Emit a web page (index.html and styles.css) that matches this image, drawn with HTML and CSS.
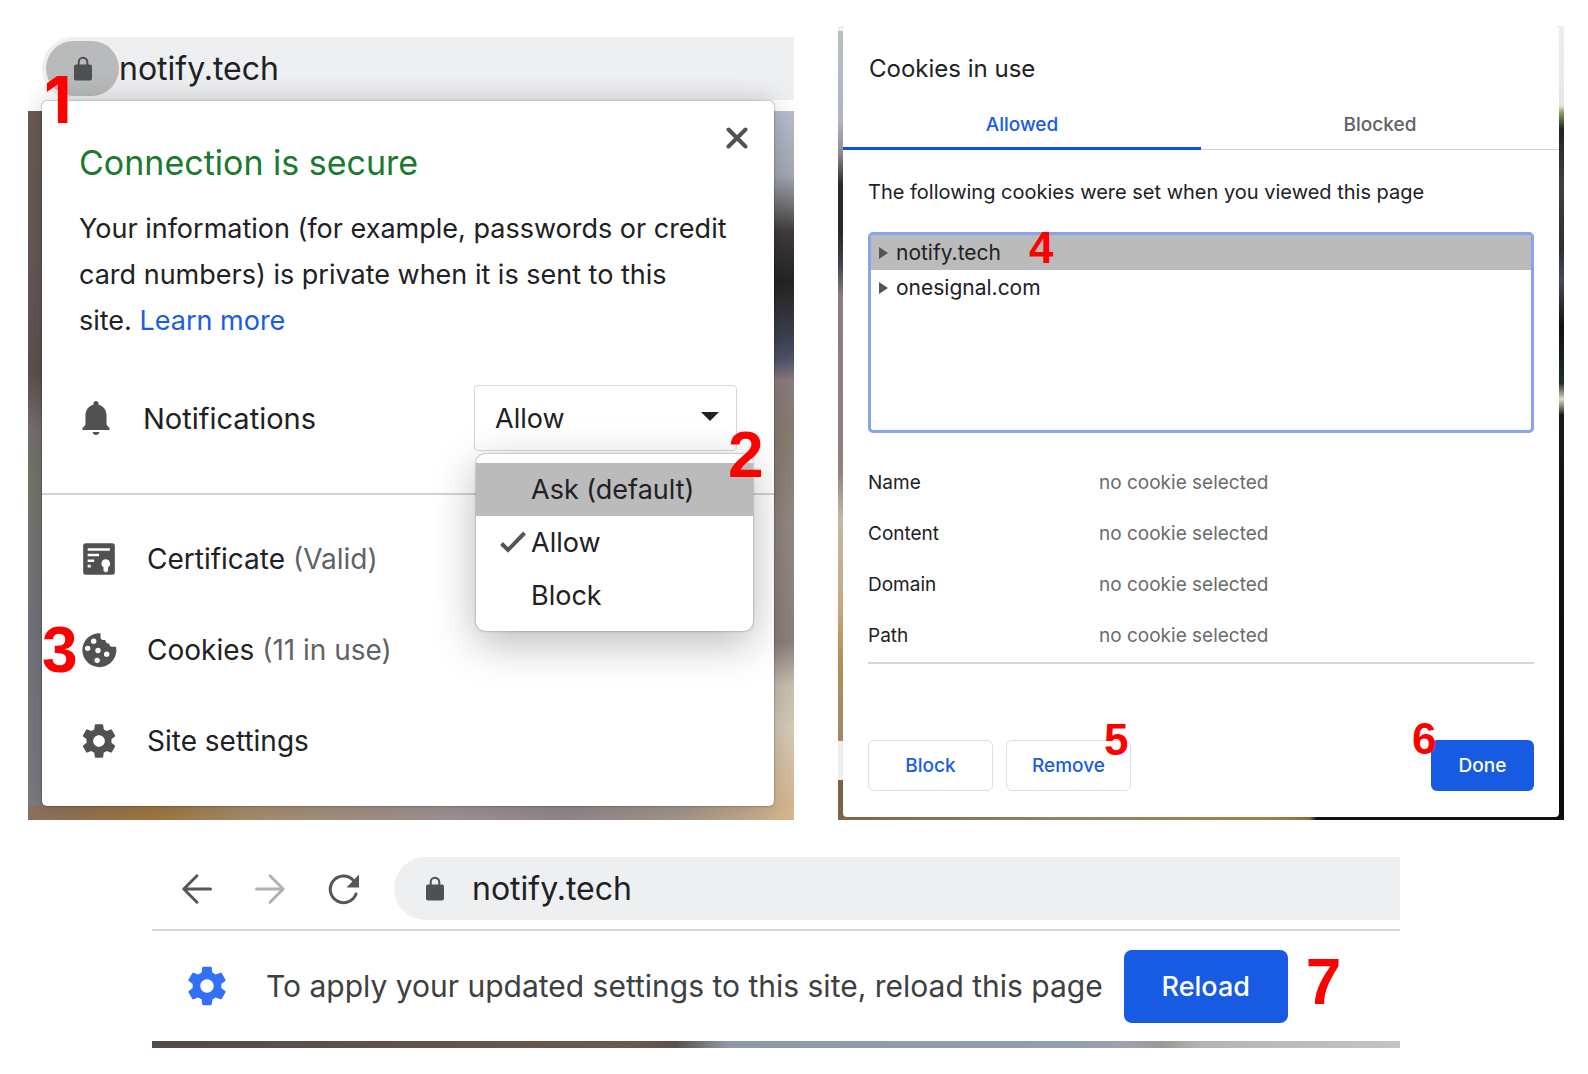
FILE: index.html
```html
<!DOCTYPE html>
<html lang="en">
<head>
  <meta charset="UTF-8" />
  <meta name="viewport" content="width=device-width, initial-scale=1.0"/>
  <title>Cookies in use</title>
  <link rel="stylesheet" href="styles.css">
</head>
<body>

  <!-- Shared icons -->
  <svg class="icon-defs" aria-hidden="true">
    <symbol id="icon-lock" viewBox="0 0 18 25">
      <path d="M4.7 10V6a4.3 4.3 0 0 1 8.6 0v4" fill="none" stroke="currentColor" stroke-width="2"/>
      <rect y="8.5" width="18" height="16" rx="2" fill="currentColor"/>
    </symbol>
    <symbol id="icon-gear" viewBox="0 0 24 24">
      <path fill="currentColor" d="M19.43 12.98c.04-.32.07-.64.07-.98s-.03-.66-.07-.98l2.11-1.65c.19-.15.24-.42.12-.64l-2-3.46c-.12-.22-.39-.3-.61-.22l-2.49 1c-.52-.4-1.08-.73-1.69-.98l-.38-2.65C14.46 2.18 14.25 2 14 2h-4c-.25 0-.46.18-.49.42l-.38 2.65c-.61.25-1.17.59-1.69.98l-2.49-1c-.23-.09-.49 0-.61.22l-2 3.46c-.13.22-.07.49.12.64l2.11 1.65c-.04.32-.07.65-.07.98s.03.66.07.98l-2.11 1.65c-.19.15-.24.42-.12.64l2 3.46c.12.22.39.3.61.22l2.49-1c.52.4 1.08.73 1.69.98l.38 2.65c.03.24.24.42.49.42h4c.25 0 .46-.18.49-.42l.38-2.65c.61-.25 1.17-.59 1.69-.98l2.49 1c.23.09.49 0 .61-.22l2-3.46c.12-.22.07-.49-.12-.64l-2.11-1.65zM12 15.5c-1.93 0-3.5-1.57-3.5-3.5s1.57-3.5 3.5-3.5 3.5 1.57 3.5 3.5-1.57 3.5-3.5 3.5z"/>
    </symbol>
  </svg>

  <main class="page">
    <div class="top-row">

      <!-- Site info popup -->
      <section class="shot site-shot">
        <div class="site-toolbar">
          <div class="omnibox">
            <button class="lock-chip" type="button" aria-label="View site information">
              <svg class="lock"><use href="#icon-lock"/></svg>
            </button>
            <span class="url">notify.tech</span>
          </div>
        </div>
        <span class="step step-1">1</span>

        <div class="site-photo">
          <div class="popup">
            <div class="popup-main">
              <div class="popup-header">
                <h1>Connection is secure</h1>
                <button class="close" type="button" aria-label="Close">
                  <svg viewBox="0 0 22 22"><path d="M2.5 2.5l17 17M19.5 2.5l-17 17"/></svg>
                </button>
              </div>
              <p>Your information (for example, passwords or credit card numbers) is private when it is sent to this site.&nbsp;<a href="#">Learn more</a></p>
              <div class="permission">
                <svg class="bell" viewBox="2 2 20 20"><path d="M12 22c1.1 0 2-.7 2-1.7h-4c0 1 .9 1.7 2 1.7zm6.2-6v-5.5c0-3.07-1.83-5.64-4.7-6.32V3.5c0-.83-.67-1.5-1.5-1.5s-1.5.67-1.5 1.5v.68C7.64 4.86 5.8 7.42 5.8 10.5V16L4 18v1.1h16V18l-1.8-2z"/></svg>
                <label for="notifications">Notifications</label>
                <div class="select">
                  <select id="notifications">
                    <option>Ask (default)</option>
                    <option selected>Allow</option>
                    <option>Block</option>
                  </select>
                  <div class="menu">
                    <button class="active" type="button">Ask (default)</button>
                    <button type="button">
                      <svg class="check" viewBox="0 0 26 22"><path d="M1.5 12.5L8 19 24.5 2"/></svg>
                      Allow
                    </button>
                    <button type="button">Block</button>
                  </div>
                  <span class="step step-2">2</span>
                </div>
              </div>
            </div>
            <ul class="popup-links">
              <li>
                <svg viewBox="0 0 24 24">
                  <path fill-rule="evenodd" d="M4 2.5h16A1.5 1.5 0 0 1 21.5 4v16a1.5 1.5 0 0 1-1.5 1.5H4A1.5 1.5 0 0 1 2.5 20V4A1.5 1.5 0 0 1 4 2.5zM5.2 5.5V7h13.3V5.5zM5.2 8.9v1.5H12V8.9zM5.2 12.3v1.5h3.9v-1.5zM5.2 15.4v1.7H7v-1.7zM16 12.2a2.6 2.6 0 0 0-1.3 4.8v2.2l1.4.9 1.3-.9V17A2.6 2.6 0 0 0 16 12.2z"/>
                </svg>
                <span>Certificate <small>(Valid)</small></span>
              </li>
              <li>
                <svg viewBox="0 0 24 24">
                  <path d="M12.9 1.9A10.2 10.2 0 1 0 22.2 10h-2.4c-1 0-1.6-.7-1.6-1.8C16.8 8.2 15.8 7.4 15.8 6h-1.3c-1 0-1.6-.7-1.6-1.6z"/>
                  <g class="crumbs"><circle cx="8.8" cy="6.7" r="1.6"/><circle cx="5.2" cy="11" r="1.6"/><circle cx="11.4" cy="12.3" r="1.6"/><circle cx="16.6" cy="14.5" r="1.6"/><circle cx="10.9" cy="18.2" r="1.6"/></g>
                </svg>
                <span>Cookies <small>(11 in use)</small></span>
                <span class="step step-3">3</span>
              </li>
              <li>
                <svg><use href="#icon-gear"/></svg>
                <span>Site settings</span>
              </li>
            </ul>
          </div>
        </div>
      </section>

      <!-- Cookies dialog -->
      <section class="shot cookie-shot">
        <div class="dialog">
          <h2>Cookies in use</h2>
          <div class="tabs">
            <button class="selected" type="button">Allowed</button>
            <button type="button">Blocked</button>
          </div>
          <div class="dialog-body">
            <p>The following cookies were set when you viewed this page</p>
            <ul class="tree">
              <li class="selected">notify.tech <span class="step small step-4">4</span></li>
              <li>onesignal.com</li>
            </ul>
            <table>
              <tr><th scope="row">Name</th><td>no cookie selected</td></tr>
              <tr><th scope="row">Content</th><td>no cookie selected</td></tr>
              <tr><th scope="row">Domain</th><td>no cookie selected</td></tr>
              <tr><th scope="row">Path</th><td>no cookie selected</td></tr>
            </table>
            <div class="actions">
              <button type="button">Block</button>
              <button type="button">Remove<span class="step small step-5">5</span></button>
              <button class="primary" type="button">Done<span class="step small step-6">6</span></button>
            </div>
          </div>
        </div>
      </section>
    </div>

    <!-- Reload bar -->
    <section class="reload-shot">
      <div class="nav">
        <button type="button" aria-label="Back">
          <svg viewBox="0 0 32 32"><path d="M29.5 16H3M16 2.8L2.8 16 16 29.2"/></svg>
        </button>
        <button class="disabled" type="button" aria-label="Forward">
          <svg viewBox="0 0 32 32"><path d="M2.5 16H29M16 2.8L29.2 16 16 29.2"/></svg>
        </button>
        <button type="button" aria-label="Reload">
          <svg viewBox="0 0 32 32"><path d="M29 21A13.3 13.3 0 1 1 26.5 7.5"/><path class="head" d="M32 1.5v13H19.5z"/></svg>
        </button>
        <div class="omnibox">
          <svg class="lock"><use href="#icon-lock"/></svg>
          <span class="url">notify.tech</span>
        </div>
      </div>
      <div class="infobar">
        <svg class="gear"><use href="#icon-gear"/></svg>
        <span class="message">To apply your updated settings to this site, reload this page</span>
        <button type="button">Reload</button>
        <span class="step step-7">7</span>
      </div>
    </section>
  </main>

</body>
</html>
```

FILE: styles.css
```css
* {
  box-sizing: border-box;
}

body {
  margin: 0;
  background: #fff;
  font-family: Inter, Roboto, sans-serif;
  color: #202124;
}

h1, h2, p, ul {
  margin: 0;
  padding: 0;
  font-weight: 400;
}

ul {
  list-style: none;
}

button, select {
  font-family: inherit;
  color: inherit;
  margin: 0;
  padding: 0;
  border: none;
  background: none;
  cursor: pointer;
}

a {
  color: #1a5ce6;
  text-decoration: none;
}

svg {
  display: block;
  flex: none;
}

.icon-defs {
  position: absolute;
  width: 0;
  height: 0;
}

.page {
  padding: 26px 24px 26px 28px;
}

.top-row {
  display: grid;
  grid-template-columns: 766fr 726fr;
  gap: 44px;
  align-items: end;
}

.shot {
  position: relative;
  overflow: hidden;
}

/* Red step numbers */
.step {
  position: absolute;
  z-index: 5;
  font: bold 64px/64px "Liberation Sans", Arial, sans-serif;
  color: #fe0000;
}

.step.small {
  font-size: 44px;
  line-height: 44px;
}

.step-1 { top: 31px; left: 16px; font-family: Inter, sans-serif; }
.step-2 { top: 38px; left: 254px; }
.step-3 { top: 14px; left: -37px; }
.step-4 { top: -9px; left: 158px; }
.step-5 { top: -23px; left: 97px; }
.step-6 { top: -23px; left: -19px; }
.step-7 { position: static; }

/* Address bar */
.omnibox {
  display: flex;
  align-items: center;
  height: 63px;
  background: #eeeff1;
  border-radius: 32px 0 0 32px;
}

.url {
  font-size: 32px;
}

.lock {
  width: 18px;
  height: 25px;
  color: #4f5052;
}

.site-toolbar {
  padding: 0 0 11px 14px;
}

.lock-chip {
  display: flex;
  align-items: center;
  justify-content: center;
  width: 73px;
  height: 55px;
  margin-left: 4px;
  border-radius: 28px;
  background: #b9babb;
}

/* Site info popup */
.site-photo {
  padding: 0 20px 14px 14px;
  background:
    linear-gradient(to right, #8c7060, #a07840 16%, #a89070 30%, #a09496 55%, #93898e 70%, #a4988c 85%, #d8b88c) bottom / 100% 14px no-repeat,
    linear-gradient(#6b5c54, #655858 25%, #5e5250 37%, #77706f 45%, #75776c 53%, #74747c 70%, #7d7c82) left / 50% 100% no-repeat,
    linear-gradient(#b9bdcc, #a4a8b6 9%, #767678 13%, #403c3c 17%, #262422 24%, #3c4250 32%, #505468 35%, #8c7c80 38%, #8a7c70 45%, #948a84 58%, #8e8280 75%, #c8bfb0 81%, #d4ccb8 87%, #d8bc9c 95%, #d0b080) right / 50% 100% no-repeat;
}

.popup {
  position: relative;
  top: -10px;
  margin-bottom: -10px;
  background: #fff;
  border-radius: 5px;
  box-shadow: 0 0 2px rgba(0, 0, 0, 0.5), 0 0 28px rgba(0, 0, 0, 0.2);
}

.popup-main {
  padding: 26px 37px 42px;
  border-bottom: 2px solid #d0d3da;
}

.popup-header {
  display: flex;
  justify-content: space-between;
  align-items: flex-start;
}

.popup-header h1 {
  margin-top: 16px;
  font-size: 34px;
  line-height: 40px;
  color: #1a7a2e;
}

.close {
  margin-right: -11px;
}

.close svg {
  width: 22px;
  height: 22px;
  fill: none;
  stroke: #505257;
  stroke-width: 4;
  stroke-linecap: round;
}

.popup-main p {
  margin-top: 23px;
  font-size: 27px;
  line-height: 46px;
}

.permission {
  display: flex;
  align-items: center;
  gap: 30px;
  margin-top: 41px;
  font-size: 29px;
}

.bell {
  width: 34px;
  height: 34px;
  fill: #505153;
}

.select {
  position: relative;
  width: 263px;
  margin-left: auto;
}

.select select {
  display: block;
  width: 100%;
  height: 66px;
  padding: 0 20px;
  border: 1px solid #d5d7e0;
  border-radius: 4px;
  background: #fff;
  font-size: 27px;
  appearance: none;
}

.select::after {
  content: "";
  position: absolute;
  top: 27px;
  right: 18px;
  border: 9px solid transparent;
  border-top-color: #202124;
  border-bottom: none;
}

.menu {
  position: absolute;
  z-index: 2;
  top: 69px;
  left: 2px;
  width: 277px;
  padding: 9px 0;
  background: #fff;
  border-radius: 9px;
  box-shadow: 0 0 2px rgba(0, 0, 0, 0.5), 0 12px 44px rgba(0, 0, 0, 0.28);
}

.menu button {
  position: relative;
  display: block;
  width: 100%;
  height: 53px;
  padding-left: 55px;
  font-size: 27px;
  text-align: left;
}

.menu .active {
  background: #bbb;
}

.check {
  position: absolute;
  top: 15px;
  left: 24px;
  width: 26px;
  height: 22px;
  fill: none;
  stroke: #555;
  stroke-width: 4;
}

.popup-links {
  padding: 18px 37px 20px;
}

.popup-links li {
  position: relative;
  display: flex;
  align-items: center;
  gap: 28px;
  height: 91px;
  font-size: 28px;
}

.popup-links small {
  font-size: 28px;
  color: #5f6368;
}

.popup-links svg {
  width: 40px;
  height: 40px;
  color: #505153;
  fill: #505153;
}

.popup-links .crumbs {
  fill: #fff;
}

/* Cookies dialog */
.cookie-shot {
  padding: 0 5px 3px;
  background:
    linear-gradient(to right, #806448, #8c8468 30%, #a08040 60%, #8a6a38 65%, #111 66%) bottom / 100% 3px no-repeat,
    linear-gradient(#eee 5px, #b8c0c0 5px, #b0b4c4 12%, #8c8c8c 16%, #2c2a28 20%, #2a2828 26%, #404450 30%, #8c7c7c 34%, #8c8480 56%, #c0b8a8 62%, #c8a880 73%, #b09058 80%, #a08868 90%, #eee 90%, #eee 95%, #7c6248 95%) left / 50% 100% no-repeat,
    linear-gradient(#eee, #e4e6e4 10%, #7c9c5c 11%, #202420 13%, #3c4240 20%, #2c3030 28%, #454b60 32%, #101010 38%, #203028 45%, #e0dcc0 47%, #1a1a14 49%, #101418 60%, #0c0c0c) right / 50% 100% no-repeat;
}

.dialog {
  background: #fff;
  border-radius: 4px;
}

.dialog h2 {
  padding: 27px 26px 13px;
  font-size: 24px;
  line-height: 32px;
}

.tabs {
  display: flex;
}

.tabs button {
  flex: 1;
  height: 52px;
  box-shadow: inset 0 -1px #d0d2dc;
  font-size: 19px;
  font-weight: 500;
  color: #5f6368;
}

.tabs .selected {
  box-shadow: inset 0 -3px #0b50ee;
  color: #1a5ce6;
}

.dialog-body {
  padding: 28px 25px 26px;
}

.dialog-body p {
  font-size: 20px;
  line-height: 28px;
}

.tree {
  height: 201px;
  margin-top: 26px;
  border: 3px solid #87a4ec;
  border-radius: 5px;
}

.tree li {
  position: relative;
  display: flex;
  align-items: center;
  gap: 8px;
  height: 35px;
  padding-left: 8px;
  font-size: 21px;
}

.tree li::before {
  content: "";
  border: 6px solid transparent;
  border-left: 9px solid #555;
  border-right: none;
}

.tree .selected {
  background: #bbb;
}

.dialog table {
  width: 100%;
  margin-top: 24px;
  padding-bottom: 1px;
  border-spacing: 0;
  border-bottom: 2px solid #d5d6de;
  font-size: 19px;
}

.dialog th, .dialog td {
  height: 51px;
  padding: 0;
  font-weight: 400;
  text-align: left;
}

.dialog th {
  width: 231px;
}

.dialog td {
  color: #6b6b6b;
}

.actions {
  display: flex;
  gap: 13px;
  margin-top: 76px;
}

.actions button {
  position: relative;
  width: 125px;
  height: 51px;
  border: 1px solid #dcdee4;
  border-radius: 6px;
  font-size: 19px;
  font-weight: 500;
  color: #1a5ce6;
}

.actions .primary {
  width: 103px;
  margin-left: auto;
  border: none;
  background: #175be2;
  color: #fff;
}

/* Reload bar */
.reload-shot {
  margin: 37px 164px 0 124px;
  padding-bottom: 7px;
  background: linear-gradient(to right, #544a48, #6c5a4c 38%, #5c504c 42%, #8c98a8 46%, #90a0b0 74%, #a0a0b0 78%, #989c94 81%, #b4b4b0 84%, #c4c4c4) bottom / 100% 7px no-repeat;
}

.nav {
  display: flex;
  align-items: center;
  padding: 0 0 9px 29px;
  border-bottom: 2px solid #d5d7de;
}

.nav button {
  margin-right: 41px;
}

.nav button svg {
  width: 32px;
  height: 32px;
  fill: none;
  stroke: #54565b;
  stroke-width: 3;
  stroke-linecap: round;
  stroke-linejoin: round;
}

.nav .disabled svg {
  stroke: #b0b1b3;
}

.nav .head {
  fill: #54565b;
  stroke: none;
}

.nav .omnibox {
  flex: 1;
  gap: 28px;
  padding-left: 32px;
  margin-left: -6px;
}

.infobar {
  display: flex;
  align-items: center;
  height: 110px;
  padding-left: 32px;
}

.gear {
  width: 46px;
  height: 46px;
  color: #3470f5;
}

.message {
  margin-left: 36px;
  font-size: 30px;
  color: #3c4043;
}

.infobar button {
  width: 164px;
  height: 73px;
  margin: 0 18px 0 21px;
  border-radius: 8px;
  background: #175be2;
  font-size: 27px;
  font-weight: 500;
  color: #fff;
}

.infobar .step {
  margin-bottom: 8px;
}
```
